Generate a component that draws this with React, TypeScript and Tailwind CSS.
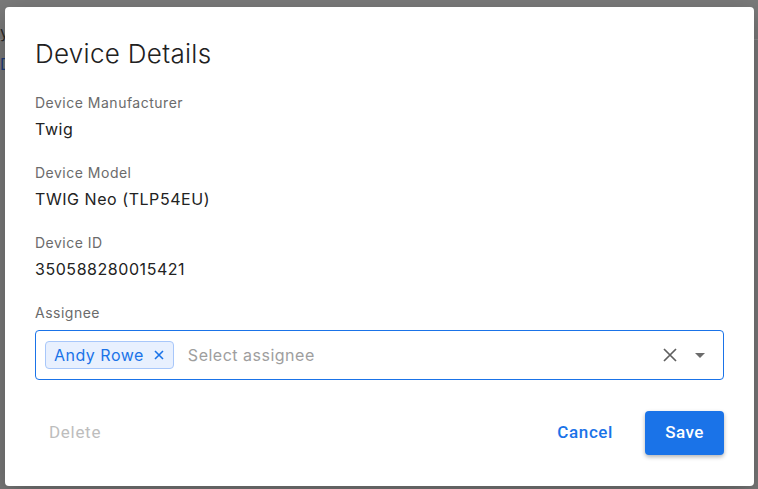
import React from "react";

const fields = [
  { label: "Device Manufacturer", value: "Twig" },
  { label: "Device Model", value: "TWIG Neo (TLP54EU)" },
  { label: "Device ID", value: "350588280015421" }
];

export default function App() {
  return (
    <div className="relative w-[758px] h-[489px] overflow-hidden bg-[#787878] font-['Inter',sans-serif]">
      {/* page behind the overlay */}
      <div className="h-[40px] border-b border-[#8a8a8a] bg-[#7a7a7a] pt-[24px] text-[16px] leading-none text-[#2a2a2a]">
        y
      </div>
      <div className="pt-[12px] text-[16px] text-[#1e3c78]">D</div>

      {/* modal */}
      <div className="absolute inset-0 pt-[7px] pl-[5px] pr-[4px] pb-[3px]">
        <div className="h-full w-full bg-white rounded-[4px] shadow-[0_8px_24px_rgba(0,0,0,0.25)] px-[30px] pt-[31px] pb-[31px] flex flex-col">
          <h2 className="text-[26px] leading-[32px] font-light text-[#212121] tracking-[0.3px]">Device Details</h2>

          <div className="mt-[23px] flex flex-col gap-[22px]">
            {fields.map((f) => (
              <div key={f.label} className="flex flex-col gap-[4px]">
                <span className="text-[14px] leading-[20px] text-[#6b6b6b] tracking-[0.5px]">{f.label}</span>
                <span className="text-[16px] leading-[24px] text-[#222] tracking-[0.55px]">{f.value}</span>
              </div>
            ))}

            <div className="flex flex-col gap-[7px]">
              <span className="text-[14px] leading-[20px] text-[#6b6b6b] tracking-[0.5px]">Assignee</span>
              <div className="h-[50px] rounded-[4px] border border-[#1a73e8] flex items-center pl-[9px] pr-[18px]">
                <div className="h-[28px] flex items-center gap-[10px] rounded-[4px] border border-[#a8c7fa] bg-[#e8f0fe] pl-[8px] pr-[9px] text-[16px] text-[#1a73e8] tracking-[0.5px]">
                  <span>Andy Rowe</span>
                  <svg width="10" height="10" viewBox="0 0 10 10" className="shrink-0">
                    <path d="M1 1L9 9M9 1L1 9" stroke="#1a73e8" strokeWidth="1.6" />
                  </svg>
                </div>
                <span className="ml-[14px] flex-1 text-[16px] text-[#9e9e9e] tracking-[0.5px]">Select assignee</span>
                <svg width="14" height="14" viewBox="0 0 14 14" className="shrink-0">
                  <path d="M1 1L13 13M13 1L1 13" stroke="#5f5f5f" strokeWidth="1.7" />
                </svg>
                <svg width="10" height="5" viewBox="0 0 10 5" className="ml-[18px] shrink-0">
                  <path d="M0 0H10L5 5Z" fill="#6b6b6b" />
                </svg>
              </div>
            </div>
          </div>

          <div className="mt-auto flex items-center font-['Roboto',sans-serif] text-[17px]">
            <button className="h-[44px] px-[14px] text-[#bdbdbd] tracking-[0.7px]">Delete</button>
            <div className="flex-1" />
            <button className="h-[44px] px-[16px] font-medium text-[#1a73e8] mr-[16px] tracking-[0.6px]">Cancel</button>
            <button className="h-[44px] w-[79px] rounded-[4px] bg-[#1a73e8] font-medium text-white tracking-[0.4px] shadow-[0_2px_4px_rgba(0,0,0,0.3)]">
              Save
            </button>
          </div>
        </div>
      </div>
    </div>
  );
}
